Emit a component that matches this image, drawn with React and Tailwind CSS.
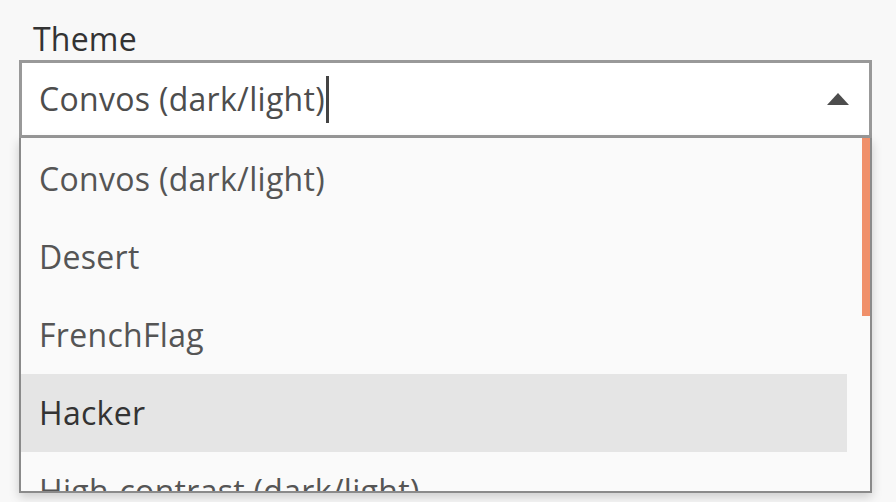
import React from 'react';

const themes = ['Convos (dark/light)', 'Desert', 'FrenchFlag', 'Hacker', 'High-contrast (dark/light)'];

export default function App() {
  return (
    <div className="min-h-screen bg-[#f8f8f8] pt-[18px] pl-[19px]" style={{ fontFamily: '"Open Sans", "Noto Sans", sans-serif' }}>
      <div className="w-[853px]">
        <label className="block pl-[14px] text-[32px] leading-[42px] tracking-[0.2px] text-[#333]">Theme</label>

        {/* select input */}
        <div className="flex items-center h-[78px] border-[3px] border-[#999] bg-white pl-[17px] pr-[18px]">
          <span className="text-[32px] tracking-[0.3px] text-[#4d4d4d]">Convos (dark/light)</span>
          <span className="ml-[1px] w-[3px] h-[47px] bg-[#444]" />
          <svg className="ml-auto mr-[2px]" width="22" height="12" viewBox="0 0 22 12">
            <path d="M0 12 L11 0 L22 12 Z" fill="#4d4d4d" />
          </svg>
        </div>

        {/* options list */}
        <div className="relative h-[355px] overflow-hidden border-x-2 border-b-2 border-[#8a8a8a] bg-[#fafafa] pt-[2px] pr-[23px] shadow-[0_4px_10px_rgba(0,0,0,0.18)]">
          {themes.map((t) => (
            <div
              key={t}
              className={`flex items-center h-[78px] pl-[18px] text-[32px] tracking-[0.3px] ${t === 'Hacker' ? 'bg-[#e5e5e5] text-[#333]' : 'text-[#555]'}`}
            >
              {t}
            </div>
          ))}
          <div className="absolute top-0 right-0 w-[8px] h-[178px] bg-[#f0906a]" />
        </div>
      </div>
    </div>
  );
}
